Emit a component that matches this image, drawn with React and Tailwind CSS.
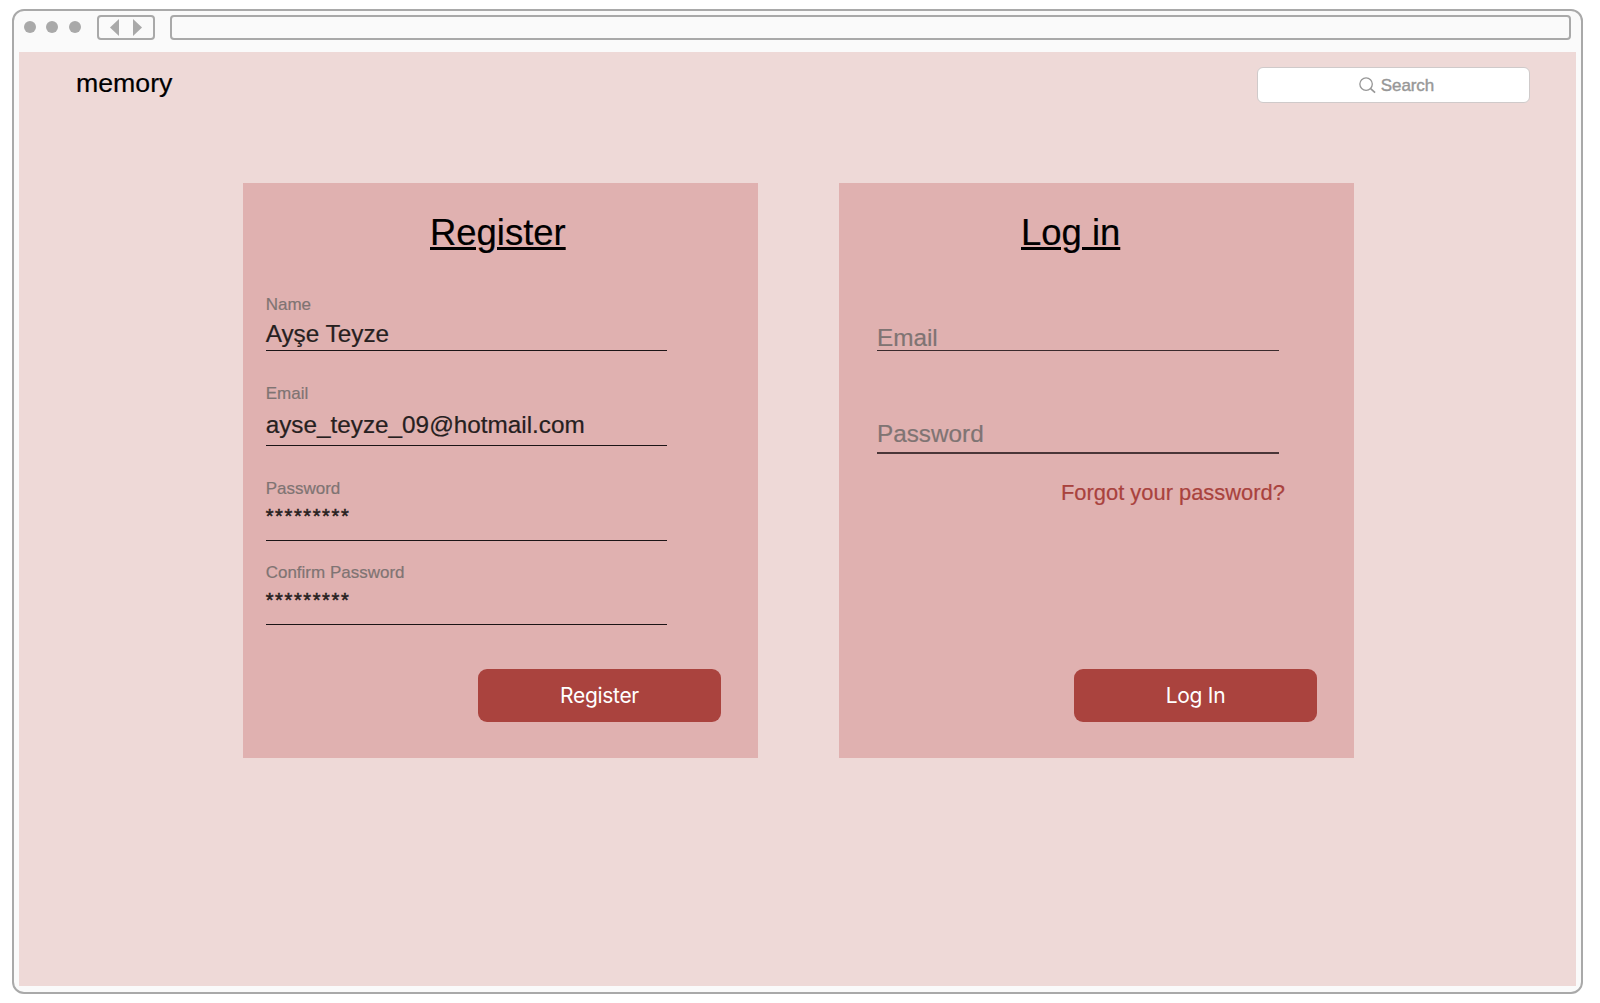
function WindowBar() {
  return (
    <div className="flex h-[41px] items-start pt-[4px]">
      <div className="ml-[10px] mt-[6px] flex gap-[10.4px]">
        <span className="size-[12px] rounded-full bg-[#a9a9a9]" />
        <span className="size-[12px] rounded-full bg-[#a9a9a9]" />
        <span className="size-[12px] rounded-full bg-[#a9a9a9]" />
      </div>
      <div className="ml-[16.2px] flex h-[25px] w-[58px] items-center gap-[14px] rounded-[4px] border-2 border-[#a9a9a9] pl-[11px]">
        <svg width="9" height="17" viewBox="0 0 9 17" fill="#a9a9a9">
          <path d="M9 0V17L0 8.5Z" />
        </svg>
        <svg width="9" height="17" viewBox="0 0 9 17" fill="#a9a9a9">
          <path d="M0 0V17L9 8.5Z" />
        </svg>
      </div>
      <div className="ml-[15px] h-[25px] w-[1401px] rounded-[4px] border-2 border-[#a9a9a9]" />
    </div>
  );
}

function Field({ label, value, className, valueClass }) {
  return (
    <div className={`ml-[22.7px] w-[401px] border-b border-[#1c1416] ${className}`}>
      <div className="h-[20px] text-[17px] leading-[20px] text-[#7f7473]">{label}</div>
      <div className={`h-[28px] leading-[28px] text-[#262020] ${valueClass}`}>{value}</div>
    </div>
  );
}

function Button({ children, className }) {
  return (
    <button
      className={`flex h-[53px] w-[243px] items-center justify-center rounded-[9px] bg-[#aa433e] font-[Inter,sans-serif] text-[21px] tracking-[-0.3px] text-white [-webkit-text-stroke:0px] ${className}`}
    >
      {children}
    </button>
  );
}

function Card({ title, titleClass, children }) {
  return (
    <section className="flex h-[575px] w-[515px] flex-col bg-[#e0b1b0] pt-[30px]">
      <h2
        className={`h-[40px] text-[36.45px] leading-[40px] text-black underline decoration-[3px] underline-offset-[2px] ${titleClass}`}
      >
        {title}
      </h2>
      {children}
    </section>
  );
}

export default function App() {
  return (
    <div className="h-[1003px] w-[1600px] overflow-hidden bg-white pl-[12px] pt-[9px] font-['Liberation_Sans',Arial,sans-serif] [-webkit-text-stroke:0.2px]">
      <div className="h-[985px] w-[1571px] rounded-[12px] border-2 border-[#a9a9a9] bg-[#fafafa]">
        <WindowBar />
        <main className="ml-[5px] h-[934px] w-[1557px] bg-[#eed9d7]">
          <header className="flex h-[131px] items-start justify-between pl-[57px] pr-[46px] pt-[15px]">
            <div className="text-[26.7px] leading-[32px] text-black">memory</div>
            <div className="flex h-[36px] w-[273px] items-center justify-center gap-[5px] rounded-[6px] border border-[#cfcaca] bg-white pl-[6px] text-[17px] text-[#979797]">
              <svg width="17" height="17" viewBox="0 0 18 18" fill="none" stroke="#979797" strokeWidth="1.4">
                <circle cx="7.5" cy="7.5" r="6.6" />
                <path d="M12.3 12.3L17 16.6" strokeWidth="1.7" />
              </svg>
              <span className="pt-[1px] tracking-[-0.1px] [-webkit-text-stroke:0.4px]">Search</span>
            </div>
          </header>
          <div className="flex gap-[81px] pl-[224px]">
            <Card title="Register" titleClass="ml-[187px]">
              <Field label="Name" value="Ayşe Teyze" className="mt-[42px]" valueClass="mt-[5px] mb-[2px] text-[24.3px]" />
              <Field label="Email" value="ayse_teyze_09@hotmail.com" className="mt-[33px]" valueClass="mt-[7px] mb-[6px] text-[24.3px]" />
              <Field label="Password" value="*********" className="mt-[33px]" valueClass="mt-[3px] mb-[10px] text-[20px] tracking-[1.62px] [-webkit-text-stroke:0.5px]" />
              <Field label="Confirm Password" value="*********" className="mt-[22px]" valueClass="mt-[3px] mb-[10px] text-[20px] tracking-[1.62px] [-webkit-text-stroke:0.5px]" />
              <Button className="ml-[235px] mt-[44px]">Register</Button>
            </Card>
            <Card title="Log in" titleClass="ml-[182px]">
              <div className="ml-[38px] mt-[73px] w-[402px] border-b border-[#3a2a2c] text-[24.3px] leading-[24px] text-[#7f7473]">
                Email
              </div>
              <div className="ml-[38px] mt-[71px] w-[402px] border-b-2 border-[#4a3638] pb-[6px] text-[24.3px] leading-[24px] text-[#7f7473]">
                Password
              </div>
              <a className="ml-[222px] mt-[25px] text-[21.9px] leading-[28px] text-[#a9423d]">Forgot your password?</a>
              <Button className="mb-[36px] ml-[235px] mt-auto">Log In</Button>
            </Card>
          </div>
        </main>
      </div>
    </div>
  );
}
